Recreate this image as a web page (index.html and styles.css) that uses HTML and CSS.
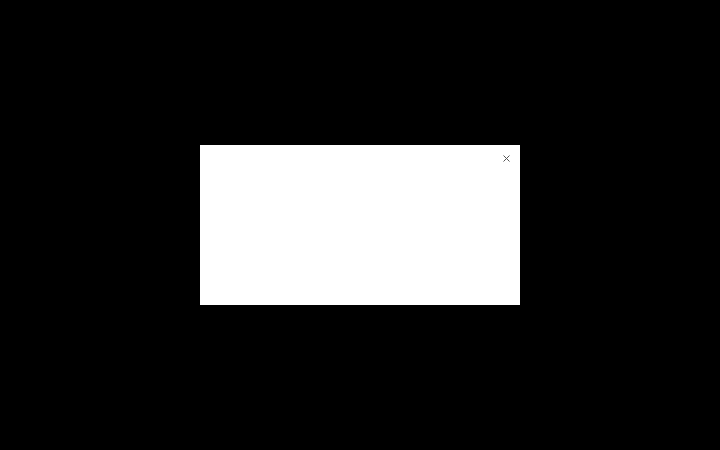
FILE: index.html
```html
<!DOCTYPE html>
<html>
<head>
<meta charset="utf-8">
<link rel="stylesheet" href="styles.css">
</head>
<body>
<div class="backdrop">
  <div class="modal">
    <button class="close" aria-label="Close">
      <svg width="7" height="7" viewBox="0 0 7 7"><path d="M0.5 0.5L6.5 6.5M6.5 0.5L0.5 6.5" stroke="#555" stroke-width="1" fill="none"/></svg>
    </button>
  </div>
</div>
</body>
</html>
```
FILE: styles.css
```css
html, body { margin: 0; padding: 0; background: #000; height: 100%; font-family: "Liberation Sans", sans-serif; }
.backdrop { width: 720px; height: 450px; display: flex; align-items: center; justify-content: center; }
.modal { position: relative; width: 320px; height: 160px; background: #fff; }
.close { position: absolute; top: 9px; right: 10px; width: 8px; height: 8px; padding: 0; border: 0; background: none; display: flex; align-items: center; justify-content: center; cursor: pointer; }
.close svg { display: block; }
```
